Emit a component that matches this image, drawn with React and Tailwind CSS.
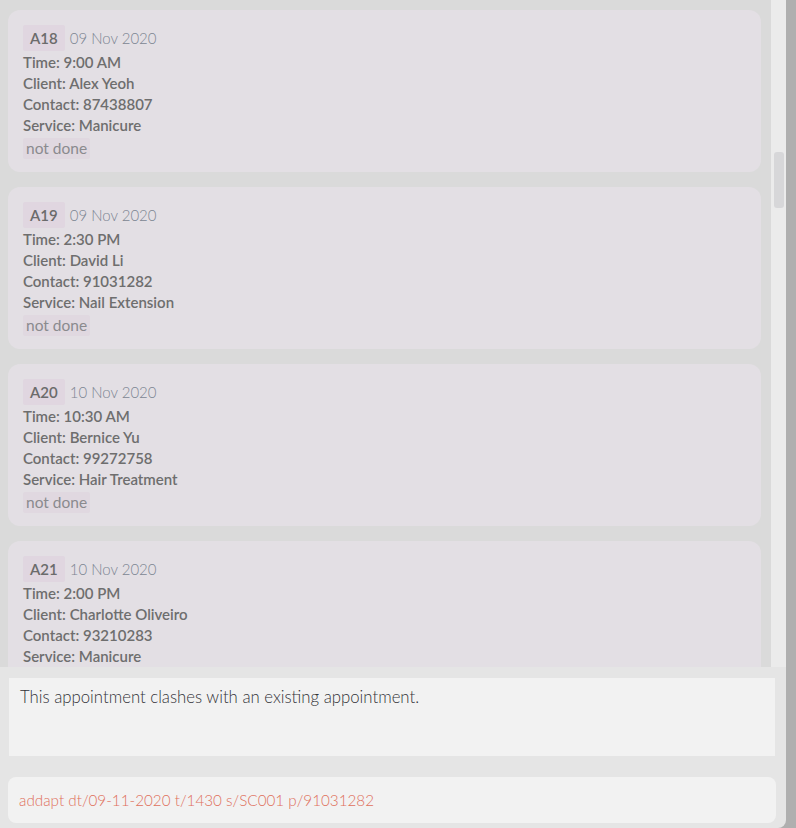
const appointments = [
  { id: "A18", date: "09 Nov 2020", time: "9:00 AM", client: "Alex Yeoh", contact: "87438807", service: "Manicure" },
  { id: "A19", date: "09 Nov 2020", time: "2:30 PM", client: "David Li", contact: "91031282", service: "Nail Extension" },
  { id: "A20", date: "10 Nov 2020", time: "10:30 AM", client: "Bernice Yu", contact: "99272758", service: "Hair Treatment" },
  { id: "A21", date: "10 Nov 2020", time: "2:00 PM", client: "Charlotte Oliveiro", contact: "93210283", service: "Manicure" },
];

function AppointmentCard({ apt }) {
  return (
    <div className="shrink-0 h-[162px] bg-[#e3dfe4] rounded-[12px] pl-[15px] pt-[15px]">
      <div className="flex items-center h-[26px]">
        <span className="h-[26px] px-[7px] flex items-center bg-[#e0d6e0] rounded-[2px] text-[15px] font-semibold text-[#6b6b6b]">
          {apt.id}
        </span>
        <span className="ml-[5px] text-[15px] font-light text-[#7c8592]">{apt.date}</span>
      </div>
      <div className="text-[15px] font-semibold text-[#6e6e6e] leading-[21px] mt-[1px]">
        <p>Time: {apt.time}</p>
        <p>Client: {apt.client}</p>
        <p>Contact: {apt.contact}</p>
        <p>Service: {apt.service}</p>
      </div>
      <span className="inline-flex items-center h-[21px] px-[3px] bg-[#e0d8e0] rounded-[2px] text-[15.5px] text-[#8a8a8e]">
        not done
      </span>
    </div>
  );
}

export default function App() {
  return (
    <div
      className="w-[796px] h-[828px] bg-[#afafaf] flex overflow-hidden"
      style={{ fontFamily: "Lato, 'Open Sans', sans-serif" }}
    >
      <div className="w-[786px] h-[828px] flex flex-col bg-[#e5e5e5] rounded-br-[8px] overflow-hidden">
        <div className="h-[667px] flex shrink-0">
          <div className="w-[771px] bg-[#dadada] flex flex-col gap-[15px] pt-[10px] pl-[8px] pr-[10px] overflow-hidden">
            {appointments.map((a) => (
              <AppointmentCard key={a.id} apt={a} />
            ))}
          </div>
          <div className="w-[15px] bg-[#ebebeb] pt-[152px] pl-[3px]">
            <div className="w-[10px] h-[56px] bg-[#d7d7d9] rounded-[3px]" />
          </div>
        </div>
        <div className="pt-[11px] px-[9px] pr-[11px]">
          <div className="h-[78px] bg-[#f2f2f2] px-[11px] pt-[6px] text-[16.75px] font-light text-[#333338]">
            This appointment clashes with an existing appointment.
          </div>
        </div>
        <div className="pt-[21px] pl-[8px] pr-[10px]">
          <div className="h-[46px] bg-[#f2f2f2] rounded-[8px] px-[11px] flex items-center text-[15.25px] font-light text-[#e0705c]">
            addapt dt/09-11-2020 t/1430 s/SC001 p/91031282
          </div>
        </div>
      </div>
    </div>
  );
}
